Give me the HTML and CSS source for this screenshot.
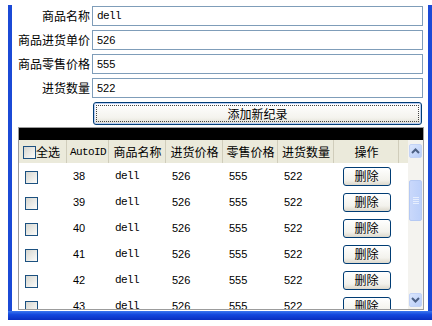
FILE: index.html
```html
<!DOCTYPE html>
<html lang="zh-CN">
<head>
  <meta charset="UTF-8">
  <title>商品进货</title>
  <link rel="stylesheet" href="styles.css">
</head>
<body>
  <div class="frame">
    <div class="window">
      <!-- 录入区 -->
      <div class="form">
        <div class="field"><label>商品名称</label><input class="mono" value="dell"></div>
        <div class="field"><label>商品进货单价</label><input value="526"></div>
        <div class="field"><label>商品零售价格</label><input value="555"></div>
        <div class="field"><label>进货数量</label><input value="522"></div>
        <button class="add">添加新纪录</button>
      </div>

      <!-- 数据表 -->
      <div class="grid">
        <div class="grid-cap"></div>
        <div class="grid-main">
          <div class="grid-view">
            <table>
              <colgroup>
                <col style="width:48px"><col style="width:42px"><col style="width:57px"><col style="width:57px">
                <col style="width:55px"><col style="width:56px"><col style="width:65px"><col style="width:9px">
              </colgroup>
              <thead>
                <tr>
                  <th class="c-sel"><span class="chk"></span>全选</th>
                  <th class="mono">AutoID</th>
                  <th>商品名称</th>
                  <th>进货价格</th>
                  <th>零售价格</th>
                  <th>进货数量</th>
                  <th>操作</th>
                  <th class="fill"></th>
                </tr>
              </thead>
              <tbody id="rows"></tbody>
            </table>
          </div>
          <div class="vscroll">
            <div class="sb-btn">
              <svg width="9" height="6" viewBox="0 0 9 6"><path d="M1 5 L4.5 1.5 L8 5" fill="none" stroke="#4d6185" stroke-width="2"/></svg>
            </div>
            <div class="sb-track">
              <div class="sb-thumb"><i></i><i></i><i></i><i></i></div>
            </div>
            <div class="sb-btn">
              <svg width="9" height="6" viewBox="0 0 9 6"><path d="M1 1 L4.5 4.5 L8 1" fill="none" stroke="#4d6185" stroke-width="2"/></svg>
            </div>
          </div>
        </div>
      </div>
    </div>
    <div class="window-foot"></div>
  </div>

  <script>
    // 表格数据
    const rows = [38, 39, 40, 41, 42, 43];
    const tbody = document.getElementById('rows');
    rows.forEach(id => {
      const tr = document.createElement('tr');
      tr.innerHTML = `
        <td class="c-sel"><span class="chk"></span></td>
        <td class="num">${id}</td>
        <td class="mono">dell</td>
        <td class="num">526</td>
        <td class="num">555</td>
        <td class="num">522</td>
        <td class="c-op"><button class="del">删除</button></td>
        <td></td>
      `;
      tbody.appendChild(tr);
    });
  </script>
</body>
</html>
```

FILE: styles.css
```css
/* General */
body {
  margin: 0;
  background: #fff;
  font-family: "Noto Sans CJK SC", sans-serif;
  font-size: 12px;
  color: #000;
}

.mono {
  font-family: "Liberation Mono", monospace;
  font-size: 11px;
  letter-spacing: -0.6px;
}

/* Window frame */
.frame {
  width: 424px;
  margin: 5px 0 0 8px;
}

.window {
  box-sizing: border-box;
  height: 306px;
  padding-top: 1px;
  border-left: 4px solid #1b4ad6;
  border-right: 4px solid #1b4ad6;
  background: #fff;
}

.window-foot {
  height: 9px;
  background: linear-gradient(#3a76ee, #1448de 40%, #0a2fc0);
}

/* Form */
.field {
  display: flex;
  align-items: center;
  height: 20px;
  margin-bottom: 4px;
}

.field label {
  width: 78px;
  margin-right: 2px;
  text-align: right;
  line-height: 20px;
  white-space: nowrap;
}

.field input {
  box-sizing: border-box;
  width: 331px;
  height: 20px;
  margin: 0;
  padding: 0 4px;
  border: 1px solid #7f9db9;
  font-family: "Liberation Sans", sans-serif;
  font-size: 11px;
  color: #000;
  outline: none;
}

.field input.mono {
  font-family: "Liberation Mono", monospace;
}

.add {
  display: block;
  box-sizing: border-box;
  width: 329px;
  height: 23px;
  margin: 0 0 0 81px;
  padding: 0;
  border: 1px solid #003c74;
  border-radius: 3px;
  background: linear-gradient(#ffffff, #f4f3ee 70%, #e0ddd2);
  box-shadow: inset 0 0 0 1px #b9cdf3;
  outline: 1px dotted #444;
  outline-offset: -4px;
  font-family: "Noto Sans CJK SC", sans-serif;
  font-size: 12px;
  line-height: 20px;
  color: #000;
}

/* Grid */
.grid {
  box-sizing: border-box;
  height: 183px;
  margin: 2px 4px 0 6px;
  border: 1px solid #9c9c9c;
  display: flex;
  flex-direction: column;
}

.grid-cap {
  height: 12px;
  background: #000;
}

.grid-main {
  flex: 1;
  display: flex;
  overflow: hidden;
}

.grid-view {
  width: 389px;
  overflow: hidden;
}

table {
  width: 389px;
  table-layout: fixed;
  border-collapse: collapse;
}

th {
  height: 23px;
  padding: 0;
  background: #ebeadb;
  box-shadow: inset -1px 0 0 #d0cdbb;
  font-weight: normal;
  text-align: center;
  white-space: nowrap;
}

th.mono {
  font-size: 11px;
}

th.fill {
  box-shadow: none;
}

th.c-sel {
  text-align: left;
  padding-left: 4px;
}

td {
  height: 26px;
  padding: 0 0 0 6px;
  vertical-align: middle;
  white-space: nowrap;
}

td.num {
  font-family: "Liberation Sans", sans-serif;
  font-size: 11px;
}

td.c-sel {
  padding-left: 6px;
}

td.c-op {
  padding: 0;
  text-align: center;
}

.chk {
  display: inline-block;
  box-sizing: border-box;
  width: 13px;
  height: 13px;
  border: 1px solid #1c5180;
  background: linear-gradient(135deg, #d6d6cf, #fcfcfa);
  vertical-align: middle;
  margin-top: -2px;
}

.del {
  box-sizing: border-box;
  width: 48px;
  height: 19px;
  padding: 0;
  border: 1px solid #003c74;
  border-radius: 3px;
  background: linear-gradient(#ffffff, #f3f2ec 70%, #dcd8cc);
  font-family: "Noto Sans CJK SC", sans-serif;
  font-size: 12px;
  line-height: 16px;
  color: #000;
}

/* Scrollbar */
.vscroll {
  box-sizing: border-box;
  width: 15px;
  padding: 4px 1px 2px 1px;
  background: #f4f3ef;
  display: flex;
  flex-direction: column;
}

.sb-btn {
  height: 14px;
  border-radius: 2px;
  border: 1px solid #c3d3f6;
  box-sizing: border-box;
  background: linear-gradient(135deg, #dbe6fd, #b8cdf8);
  display: flex;
  align-items: center;
  justify-content: center;
}

.sb-track {
  flex: 1;
}

.sb-thumb {
  box-sizing: border-box;
  height: 41px;
  margin-top: 22px;
  border: 1px solid #b5c9f3;
  border-radius: 2px;
  background: linear-gradient(90deg, #c9d8fb, #bcd0fa);
  display: flex;
  flex-direction: column;
  align-items: center;
  justify-content: center;
  gap: 1px;
}

.sb-thumb i {
  display: block;
  width: 6px;
  height: 1px;
  background: #e6eefe;
}
```
